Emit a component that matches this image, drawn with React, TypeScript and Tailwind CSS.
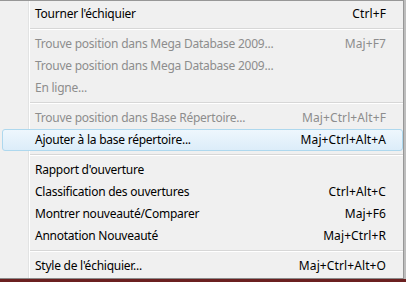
import React from "react";

type Item = { type: "item"; label: string; shortcut?: string; disabled?: boolean; hl?: boolean } | { type: "sep" };

const items: Item[] = [
  { type: "item", label: "Tourner l'échiquier", shortcut: "Ctrl+F" },
  { type: "sep" },
  { type: "item", label: "Trouve position dans Mega Database 2009...", shortcut: "Maj+F7", disabled: true },
  { type: "item", label: "Trouve position dans Mega Database 2009...", disabled: true },
  { type: "item", label: "En ligne...", disabled: true },
  { type: "sep" },
  { type: "item", label: "Trouve position dans Base Répertoire...", shortcut: "Maj+Ctrl+Alt+F", disabled: true },
  { type: "item", label: "Ajouter à la base répertoire...", shortcut: "Maj+Ctrl+Alt+A", hl: true },
  { type: "sep" },
  { type: "item", label: "Rapport d'ouverture" },
  { type: "item", label: "Classification des ouvertures", shortcut: "Ctrl+Alt+C" },
  { type: "item", label: "Montrer nouveauté/Comparer", shortcut: "Maj+F6" },
  { type: "item", label: "Annotation Nouveauté", shortcut: "Maj+Ctrl+R" },
  { type: "sep" },
  { type: "item", label: "Style de l'échiquier...", shortcut: "Maj+Ctrl+Alt+O" },
];

export default function App() {
  return (
    <div className="w-[406px] h-[282px] bg-[#5b1c1c] overflow-hidden" style={{ fontFamily: '"Noto Sans", "Segoe UI", sans-serif' }}>
      <div className="flex h-[279px]">
        <div className="relative w-[404px] h-full bg-[#f0f0f0] border-t border-[#979797] border-b border-b-[#8a8a8a] border-r border-r-[#979797] flex flex-col pt-[2px]">
          <div className="absolute left-[28px] top-0 bottom-0 w-[1px] bg-[#e2e3e3]" />
          <div className="absolute left-[29px] top-0 bottom-0 w-[1px] bg-white" />
          {items.map((it, i) =>
            it.type === "sep" ? (
              <div key={i} className="h-[8px] flex flex-col pl-[30px] pt-[3px]">
                <div className="h-[1px] bg-[#d7d7d7]" />
                <div className="h-[1px] bg-white" />
              </div>
            ) : (
              <div key={i} className="relative h-[22px] flex items-center pl-[35px] pr-[17px] text-[12px] leading-none">
                {it.hl && (
                  <div className="absolute left-[2px] right-[0px] top-0 bottom-0 rounded-[3px] border border-[#aed8ee] bg-gradient-to-b from-[#eef7fd] to-[#dcedf9]" />
                )}
                <span className={`relative flex-1 tracking-[-0.25px] ${it.disabled ? "text-[#8d8d8d]" : "text-black"}`}>{it.label}</span>
                {it.shortcut && (
                  <span className={`relative tracking-[0.1px] ${it.disabled ? "text-[#8d8d8d]" : "text-black"}`}>{it.shortcut}</span>
                )}
              </div>
            )
          )}
        </div>
        <div className="w-[2px] h-full bg-[#bdbdbd]" />
      </div>
      <div className="h-[3px] bg-[#6b2020]" />
    </div>
  );
}
